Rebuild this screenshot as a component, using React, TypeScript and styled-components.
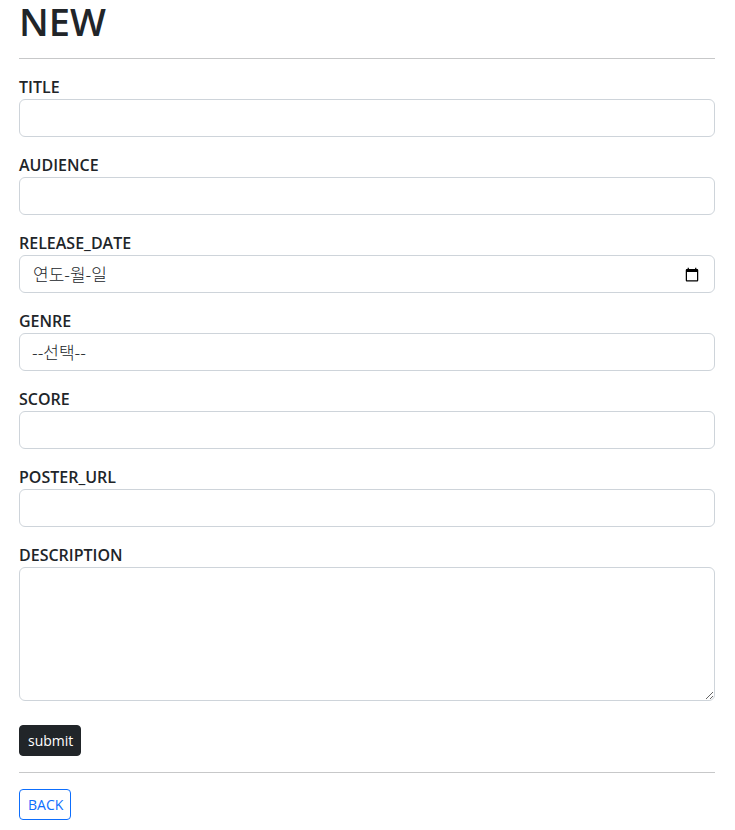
import React from "react";
import styled, { createGlobalStyle, css } from "styled-components";

const GlobalStyle = createGlobalStyle`
  *, *::before, *::after { box-sizing: border-box; }
  body {
    margin: 0;
    background: #fff;
    color: #212529;
    font-family: "Open Sans", "Noto Sans CJK KR", sans-serif;
    font-size: 16px;
    line-height: 24px;
  }
`;

const Page = styled.main`
  padding: 0 20px 8px 19px;
`;

const Heading = styled.h1`
  margin: 0;
  font-size: 38px;
  font-weight: 600;
  line-height: 42px;
`;

const Divider = styled.hr`
  margin: 16px 0;
  border: 0;
  border-top: 1px solid #c7c8c9;
`;

const Form = styled.form`
  display: flex;
  flex-direction: column;
  gap: 16px;
`;

const Field = styled.div`
  display: flex;
  flex-direction: column;
`;

const Label = styled.label`
  align-self: flex-start;
  font-weight: 600;
`;

const controlFrame = css`
  width: 100%;
  height: 38px;
  padding: 6px 12px;
  border: 1px solid #ced4da;
  border-radius: 6px;
  background: #fff;
  color: inherit;
`;

const koreanText = css`
  font-family: "Noto Sans CJK KR", sans-serif;
  font-size: 17px;
  font-weight: 300;
  line-height: 24px;
`;

const Input = styled.input`
  ${controlFrame}
  font: inherit;
`;

const Select = styled.select`
  ${controlFrame}
  ${koreanText}
  appearance: none;
`;

const TextArea = styled.textarea`
  ${controlFrame}
  display: block;
  height: auto;
  font: inherit;
  resize: vertical;
`;

const DateBox = styled.div`
  ${controlFrame}
  display: flex;
  align-items: center;
  padding: 0 14px 0 13px;
`;

const DateText = styled.input`
  ${koreanText}
  flex: 1;
  min-width: 0;
  padding: 0;
  border: 0;
  outline: 0;
  background: transparent;
  color: inherit;
  &::placeholder { color: inherit; opacity: 1; }
`;

const PickerButton = styled.button`
  display: flex;
  padding: 0;
  border: 0;
  background: transparent;
  color: #000;
  cursor: pointer;
`;

const smallButton = css`
  padding: 4px 7px 4px 8px;
  border: 1px solid;
  border-radius: 4px;
  font-family: inherit;
  font-size: 14px;
  line-height: 21px;
  cursor: pointer;
`;

const SubmitButton = styled.button`
  ${smallButton}
  align-self: flex-start;
  margin-top: 8px;
  border-color: #212529;
  background: #212529;
  color: #fff;
`;

const BackLink = styled.a`
  ${smallButton}
  display: inline-block;
  border-color: #0d6efd;
  color: #0d6efd;
  text-decoration: none;
`;

function TextField({ id, label }: { id: string; label: string }) {
  return (
    <Field>
      <Label htmlFor={id}>{label}</Label>
      <Input id={id} name={id} type="text" />
    </Field>
  );
}

export default function App() {
  return (
    <>
      <GlobalStyle />
      <Page>
        <Heading>NEW</Heading>
        <Divider />
        <Form onSubmit={(event) => event.preventDefault()}>
          <TextField id="title" label="TITLE" />
          <TextField id="audience" label="AUDIENCE" />
          <Field>
            <Label htmlFor="release_date">RELEASE_DATE</Label>
            <DateBox>
              <DateText id="release_date" name="release_date" type="text" placeholder="연도-월-일" />
              <PickerButton type="button" aria-label="날짜 선택">
                <svg width="16" height="15" viewBox="0 0 24 24" fill="currentColor" aria-hidden="true">
                  <path d="M20 3h-1V1h-2v2H7V1H5v2H4c-1.1 0-2 .9-2 2v16c0 1.1.9 2 2 2h16c1.1 0 2-.9 2-2V5c0-1.1-.9-2-2-2zm0 18H4V8h16v13z" />
                </svg>
              </PickerButton>
            </DateBox>
          </Field>
          <Field>
            <Label htmlFor="genre">GENRE</Label>
            <Select id="genre" name="genre" defaultValue="">
              <option value="">--선택--</option>
            </Select>
          </Field>
          <TextField id="score" label="SCORE" />
          <TextField id="poster_url" label="POSTER_URL" />
          <Field>
            <Label htmlFor="description">DESCRIPTION</Label>
            <TextArea id="description" name="description" rows={5} />
          </Field>
          <SubmitButton type="submit">submit</SubmitButton>
        </Form>
        <Divider />
        <BackLink href="#back">BACK</BackLink>
      </Page>
    </>
  );
}
